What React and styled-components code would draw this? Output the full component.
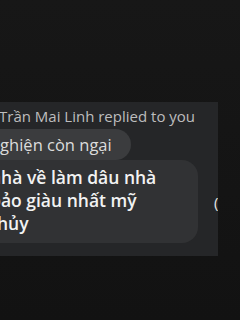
import React from "react";
import styled, { createGlobalStyle } from "styled-components";

const Global = createGlobalStyle`
  html, body { margin: 0; padding: 0; }
  body {
    width: 240px;
    height: 320px;
    overflow: hidden;
    background: linear-gradient(180deg, #171717 0%, #121212 100%);
    font-family: "Open Sans", "Noto Sans", sans-serif;
  }
`;

const Page = styled.div`
  height: 320px;
  padding-top: 102px;
  box-sizing: border-box;
`;

const Panel = styled.div`
  width: 218px;
  height: 154px;
  background: #252628;
  overflow: hidden;
  box-sizing: border-box;
  padding: 5px 0 13px 0;
`;

const Inner = styled.div`
  margin-left: -22px;
  display: flex;
  flex-direction: column;
  align-items: flex-start;
`;

const ReplyHeader = styled.div`
  margin-left: 21px;
  font-size: 15px;
  line-height: 19px;
  color: #bdbdbe;
  white-space: nowrap;
  margin-bottom: 3px;
`;

const Row = styled.div`
  display: flex;
  align-items: center;
  gap: 16px;
`;

const Bubble = styled.div`
  padding: ${(p) => (p.$main ? "6px 0 8px 12px" : "6px 19px 6px 12px")};
  border-radius: 16px;
  background: ${(p) => (p.$main ? "#313234" : "#3b3c3e")};
  color: ${(p) => (p.$main ? "#f2f2f2" : "#dcdcdc")};
  font-size: ${(p) => (p.$main ? "17.5px" : "16.5px")};
  font-weight: ${(p) => (p.$main ? 600 : 400)};
  line-height: ${(p) => (p.$main ? "23px" : "19px")};
  width: ${(p) => (p.$main ? "220px" : "auto")};
  box-sizing: border-box;
  white-space: nowrap;
`;

const Action = styled.span`
  color: #e6e6e6;
  font-size: 15px;
  line-height: 18px;
`;

export default function App() {
  return (
    <>
      <Global />
      <Page>
        <Panel>
          <Inner>
            <ReplyHeader>Trần Mai Linh replied to you</ReplyHeader>
            <Bubble>nghiện còn ngại</Bubble>
            <Row>
              <Bubble $main>
                nhà về làm dâu nhà
                <br />
                bảo giàu nhất mỹ
                <br />
                thủy
              </Bubble>
              <Action>(</Action>
            </Row>
          </Inner>
        </Panel>
      </Page>
    </>
  );
}
